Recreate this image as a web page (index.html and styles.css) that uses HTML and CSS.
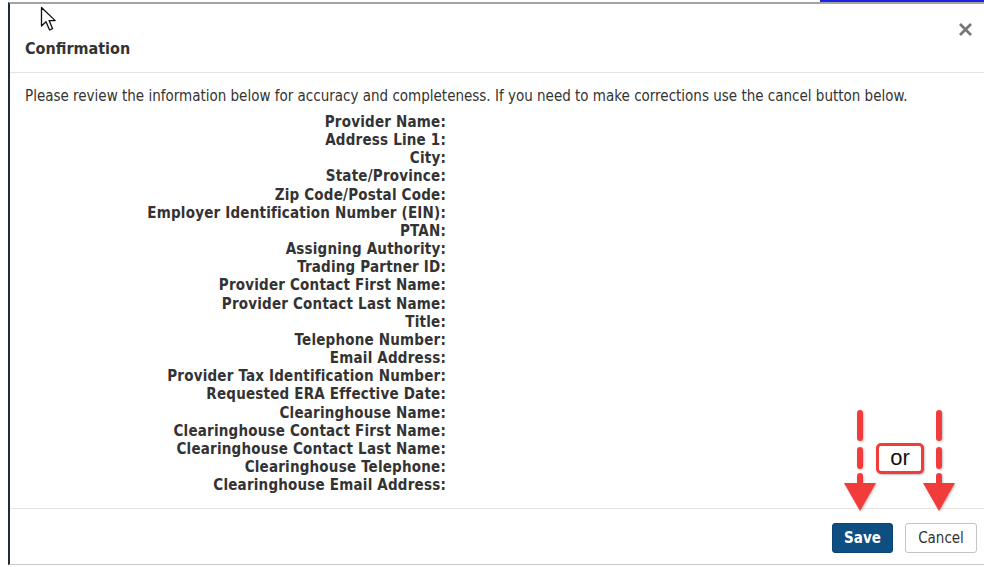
FILE: index.html
```html
<!DOCTYPE html>
<html lang="en">
<head>
<meta charset="utf-8">
<title>Confirmation</title>
<link rel="stylesheet" href="styles.css">
</head>
<body>
<div class="topbar"><span class="topbar-link"></span></div>
<div class="dialog">
  <div class="dialog-header">
    <h2 class="dialog-title">Confirmation</h2>
    <button class="close" type="button" aria-label="Close">
      <svg width="15" height="15" viewBox="0 0 15 15"><path d="M2 2 L13 13 M13 2 L2 13" stroke="#777" stroke-width="2.8" stroke-linecap="butt"/></svg>
    </button>
  </div>
  <div class="dialog-body">
    <p class="intro">Please review the information below for accuracy and completeness. If you need to make corrections use the cancel button below.</p>
    <dl class="summary">
      <dt>Provider Name:</dt><dd></dd>
      <dt>Address Line 1:</dt><dd></dd>
      <dt>City:</dt><dd></dd>
      <dt>State/Province:</dt><dd></dd>
      <dt>Zip Code/Postal Code:</dt><dd></dd>
      <dt>Employer Identification Number (EIN):</dt><dd></dd>
      <dt>PTAN:</dt><dd></dd>
      <dt>Assigning Authority:</dt><dd></dd>
      <dt>Trading Partner ID:</dt><dd></dd>
      <dt>Provider Contact First Name:</dt><dd></dd>
      <dt>Provider Contact Last Name:</dt><dd></dd>
      <dt>Title:</dt><dd></dd>
      <dt>Telephone Number:</dt><dd></dd>
      <dt>Email Address:</dt><dd></dd>
      <dt>Provider Tax Identification Number:</dt><dd></dd>
      <dt>Requested ERA Effective Date:</dt><dd></dd>
      <dt>Clearinghouse Name:</dt><dd></dd>
      <dt>Clearinghouse Contact First Name:</dt><dd></dd>
      <dt>Clearinghouse Contact Last Name:</dt><dd></dd>
      <dt>Clearinghouse Telephone:</dt><dd></dd>
      <dt>Clearinghouse Email Address:</dt><dd></dd>
    </dl>
  </div>
  <div class="dialog-footer">
    <button class="btn btn-primary" type="button">Save</button>
    <button class="btn btn-default" type="button">Cancel</button>
  </div>

  <!-- callout pointing at the two footer actions -->
  <div class="callout">
    <svg class="callout-arrows" width="120" height="110" viewBox="0 0 120 110">
      <g stroke="#f23c3c" stroke-width="6" stroke-linecap="round" fill="none">
        <line x1="20" y1="7" x2="20" y2="32"/>
        <line x1="20" y1="44" x2="20" y2="60"/>
        <line x1="20" y1="70" x2="20" y2="78"/>
        <line x1="99" y1="7" x2="99" y2="32"/>
        <line x1="99" y1="44" x2="99" y2="60"/>
        <line x1="99" y1="70" x2="99" y2="78"/>
      </g>
      <g fill="#f23c3c">
        <polygon points="4,77 36,77 20,105"/>
        <polygon points="83,77 115,77 99,105"/>
      </g>
    </svg>
    <span class="callout-or">or</span>
  </div>

  <svg class="pointer" width="20" height="28" viewBox="0 0 20 28">
    <path d="M1.5 1.5 L1.5 20 L6 15.8 L9.6 24 L12.6 22.7 L9.1 14.6 L15.2 14.6 Z" fill="#fff" stroke="#111" stroke-width="1.3" stroke-linejoin="round"/>
  </svg>
</div>
</body>
</html>
```

FILE: styles.css
```css
html, body {
  margin: 0;
  padding: 0;
  background: #ffffff;
  overflow: hidden;
}

body {
  width: 984px;
  height: 567px;
  font-family: "DejaVu Sans Condensed", "DejaVu Sans", sans-serif;
  color: #333333;
  position: relative;
}

.topbar {
  height: 2px;
  position: relative;
}

.topbar-link {
  position: absolute;
  left: 820px;
  right: 0;
  top: 0;
  height: 3px;
  background: #1a24e0;
}

.dialog {
  position: relative;
  margin-left: 8px;
  height: 563px;
  box-sizing: border-box;
  border-top: 2px solid #a3a3a3;
  border-left: 2px solid #1f2b3b;
  border-bottom: 1px solid #c9c9c9;
  display: flex;
  flex-direction: column;
  background: #fff;
}

.dialog-header {
  height: 69px;
  flex-shrink: 0;
  box-sizing: border-box;
  border-bottom: 1px solid #e3e3e3;
  display: flex;
  justify-content: space-between;
  padding: 0 11px 0 15px;
}

.dialog-title {
  align-self: flex-end;
  margin: 0 0 14px;
  font-size: 16px;
  font-weight: bold;
  color: #333;
  line-height: 18px;
}

.close {
  margin-top: 18px;
  align-self: flex-start;
  border: 0;
  background: none;
  padding: 0;
  width: 15px;
  height: 15px;
  display: flex;
}

.dialog-body {
  flex: 1;
  padding: 14px 15px 0;
}

.intro {
  margin: 0;
  font-size: 15px;
  line-height: 18px;
}

.summary {
  margin: 8px 0 0;
  display: grid;
  grid-template-columns: 421px 1fr;
  font-size: 15px;
  line-height: 18.15px;
}

.summary dt {
  font-weight: bold;
  text-align: right;
  letter-spacing: 0.2px;
}

.summary dd {
  margin: 0;
}

.dialog-footer {
  flex-shrink: 0;
  border-top: 1px solid #e3e3e3;
  display: flex;
  justify-content: flex-end;
  gap: 12px;
  padding: 14px 7px 11px;
  height: 56px;
  box-sizing: border-box;
}

.btn {
  height: 30px;
  border-radius: 3px;
  font-family: "DejaVu Sans Condensed", "DejaVu Sans", sans-serif;
  font-size: 15px;
  padding: 0;
  cursor: pointer;
}

.btn-primary {
  width: 61px;
  background: #0d4f83;
  border: 1px solid #0b4474;
  color: #fff;
  font-weight: bold;
}

.btn-default {
  width: 72px;
  background: #fff;
  border: 1px solid #c4c4c4;
  color: #333;
}

.callout {
  position: absolute;
  left: 830px;
  top: 402px;
  width: 120px;
  height: 110px;
}

.callout-arrows {
  display: block;
  filter: drop-shadow(1px 1px 1px rgba(0, 0, 0, 0.25));
}

.callout-or {
  position: absolute;
  left: 36px;
  top: 37px;
  width: 48px;
  height: 31px;
  box-sizing: border-box;
  border: 3px solid #f23c3c;
  border-radius: 5px;
  background: #fff;
  font-family: "Liberation Sans", Arial, sans-serif;
  font-size: 22px;
  line-height: 23px;
  text-align: center;
  color: #111;
  box-shadow: 1px 1px 2px rgba(0, 0, 0, 0.25);
}

.pointer {
  position: absolute;
  left: 30px;
  top: 2px;
}
```
